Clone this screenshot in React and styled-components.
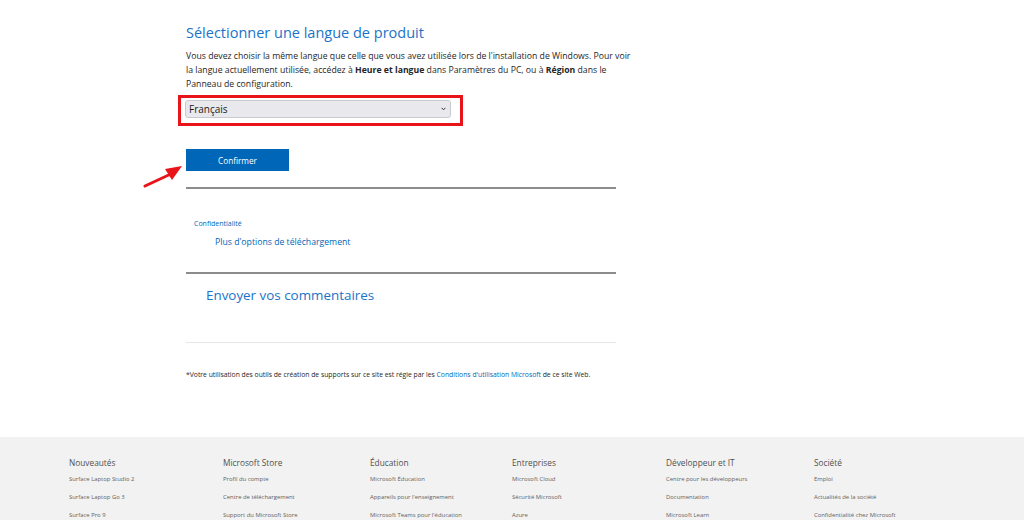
import React from "react";
import styled, { createGlobalStyle } from "styled-components";

const Global = createGlobalStyle`
  html, body { margin: 0; padding: 0; background: #fff; }
  body { font-family: "Open Sans", "Noto Sans", sans-serif; color: #262626; }
  * { box-sizing: border-box; }
`;

const Page = styled.div`
  width: 1024px;
  height: 520px;
  overflow: hidden;
  display: flex;
  flex-direction: column;
`;

const Main = styled.main`
  flex: 0 0 437px;
  padding: 23px 0 0 186px;
  display: flex;
  flex-direction: column;
`;

const Title = styled.h2`
  margin: 0;
  font-size: 14.5px;
  line-height: 20px;
  font-weight: 400;
  color: #1a73c8;
`;

const Para = styled.p`
  margin: 6px 0 0;
  width: 480px;
  font-size: 8.7px;
  line-height: 14px;
  color: #262626;
  white-space: nowrap;
  b { font-weight: 700; }
`;

const Highlight = styled.div`
  margin: 4px 0 0 -8px;
  width: 285px;
  border: 3px solid #e8141a;
  padding: 2px 9px 5px 4px;
`;

const SelectWrap = styled.div`
  position: relative;
  height: 18px;
`;

const Select = styled.select`
  display: block;
  appearance: none;
  width: 100%;
  height: 18px;
  margin: 0;
  padding: 0 0 0 3px;
  background: #e9e9ed;
  border: 1px solid #c9c9d0;
  border-radius: 3px;
  font-family: inherit;
  font-size: 10px;
  color: #1a1a1a;
  outline: none;
`;

const Chevron = styled.svg`
  position: absolute;
  right: 5px;
  top: 7px;
  width: 5px;
  height: 4px;
  pointer-events: none;
`;

const ButtonRow = styled.div`
  position: relative;
  margin-top: 23px;
  height: 22px;
`;

const Button = styled.button`
  display: block;
  width: 103px;
  height: 22px;
  border: 0;
  background: #0067b8;
  color: #fff;
  font-family: inherit;
  font-size: 8.2px;
  padding: 0;
`;

const Arrow = styled.svg`
  position: absolute;
  left: -43px;
  top: 15px;
  width: 42px;
  height: 24px;
  overflow: visible;
`;

const Rule = styled.hr`
  margin: ${(p) => p.$top}px 0 0;
  width: 430px;
  border: 0;
  height: ${(p) => (p.$light ? 1 : 2)}px;
  background: ${(p) => (p.$light ? "#e6e6e6" : "#8c8c8c")};
`;

const SmallLink = styled.a`
  display: block;
  margin: 29px 0 0 8px;
  font-size: 7px;
  line-height: 12px;
  color: #0067b8;
  text-decoration: none;
`;

const MoreLink = styled.a`
  display: block;
  margin: 5px 0 0 29px;
  font-size: 8.7px;
  line-height: 14px;
  color: #0067b8;
  text-decoration: none;
`;

const Feedback = styled.h3`
  margin: 11px 0 0 20px;
  font-size: 13.4px;
  line-height: 20px;
  font-weight: 400;
  color: #1a73c8;
`;

const Note = styled.p`
  margin: 27px 0 0;
  font-size: 6.8px;
  line-height: 10px;
  color: #262626;
  white-space: nowrap;
  a { color: #0067b8; text-decoration: none; }
`;

const Footer = styled.footer`
  flex: 1;
  background: #f2f2f2;
  padding: 20px 0 0 69px;
  display: grid;
  grid-template-columns: 154px 147px 142px 154px 148px 1fr;
`;

const Col = styled.div`
  display: flex;
  flex-direction: column;
`;

const ColHead = styled.div`
  font-size: 8.3px;
  line-height: 12px;
  color: #505050;
  font-weight: 500;
  margin-bottom: 5px;
`;

const ColLink = styled.a`
  font-size: 5.9px;
  line-height: 10px;
  color: #616161;
  text-decoration: none;
  margin-bottom: 8px;
`;

const footer = [
  ["Nouveautés", ["Surface Laptop Studio 2", "Surface Laptop Go 3", "Surface Pro 9"]],
  ["Microsoft Store", ["Profil du compte", "Centre de téléchargement", "Support du Microsoft Store"]],
  ["Éducation", ["Microsoft Éducation", "Appareils pour l'enseignement", "Microsoft Teams pour l'éducation"]],
  ["Entreprises", ["Microsoft Cloud", "Sécurité Microsoft", "Azure"]],
  ["Développeur et IT", ["Centre pour les développeurs", "Documentation", "Microsoft Learn"]],
  ["Société", ["Emploi", "Actualités de la société", "Confidentialité chez Microsoft"]],
];

export default function App() {
  return (
    <Page>
      <Global />
      <Main>
        <Title>Sélectionner une langue de produit</Title>
        <Para>
          Vous devez choisir la même langue que celle que vous avez utilisée lors de l'installation de Windows. Pour voir
          <br />
          la langue actuellement utilisée, accédez à <b>Heure et langue</b> dans Paramètres du PC, ou à <b>Région</b> dans le
          <br />
          Panneau de configuration.
        </Para>
        <Highlight>
          <SelectWrap>
            <Select defaultValue="fr">
              <option value="fr">Français</option>
            </Select>
            <Chevron viewBox="0 0 5 4">
              <path d="M0.6 0.8 L2.5 2.8 L4.4 0.8" fill="none" stroke="#333" strokeWidth="1" />
            </Chevron>
          </SelectWrap>
        </Highlight>
        <ButtonRow>
          <Button>Confirmer</Button>
          <Arrow viewBox="0 0 42 24">
            <line x1="2" y1="22" x2="30" y2="9" stroke="#e8141a" strokeWidth="3" strokeLinecap="round" />
            <polygon points="39,2 22,5 29,16" fill="#e8141a" />
          </Arrow>
        </ButtonRow>
        <Rule $top={16} />
        <SmallLink href="#">Confidentialité</SmallLink>
        <MoreLink href="#">Plus d'options de téléchargement</MoreLink>
        <Rule $top={23} />
        <Feedback>Envoyer vos commentaires</Feedback>
        <Rule $top={37} $light />
        <Note>
          *Votre utilisation des outils de création de supports sur ce site est régie par les{" "}
          <a href="#">Conditions d'utilisation Microsoft</a> de ce site Web.
        </Note>
      </Main>
      <Footer>
        {footer.map(([head, links]) => (
          <Col key={head}>
            <ColHead>{head}</ColHead>
            {links.map((l) => (
              <ColLink key={l} href="#">{l}</ColLink>
            ))}
          </Col>
        ))}
      </Footer>
    </Page>
  );
}
